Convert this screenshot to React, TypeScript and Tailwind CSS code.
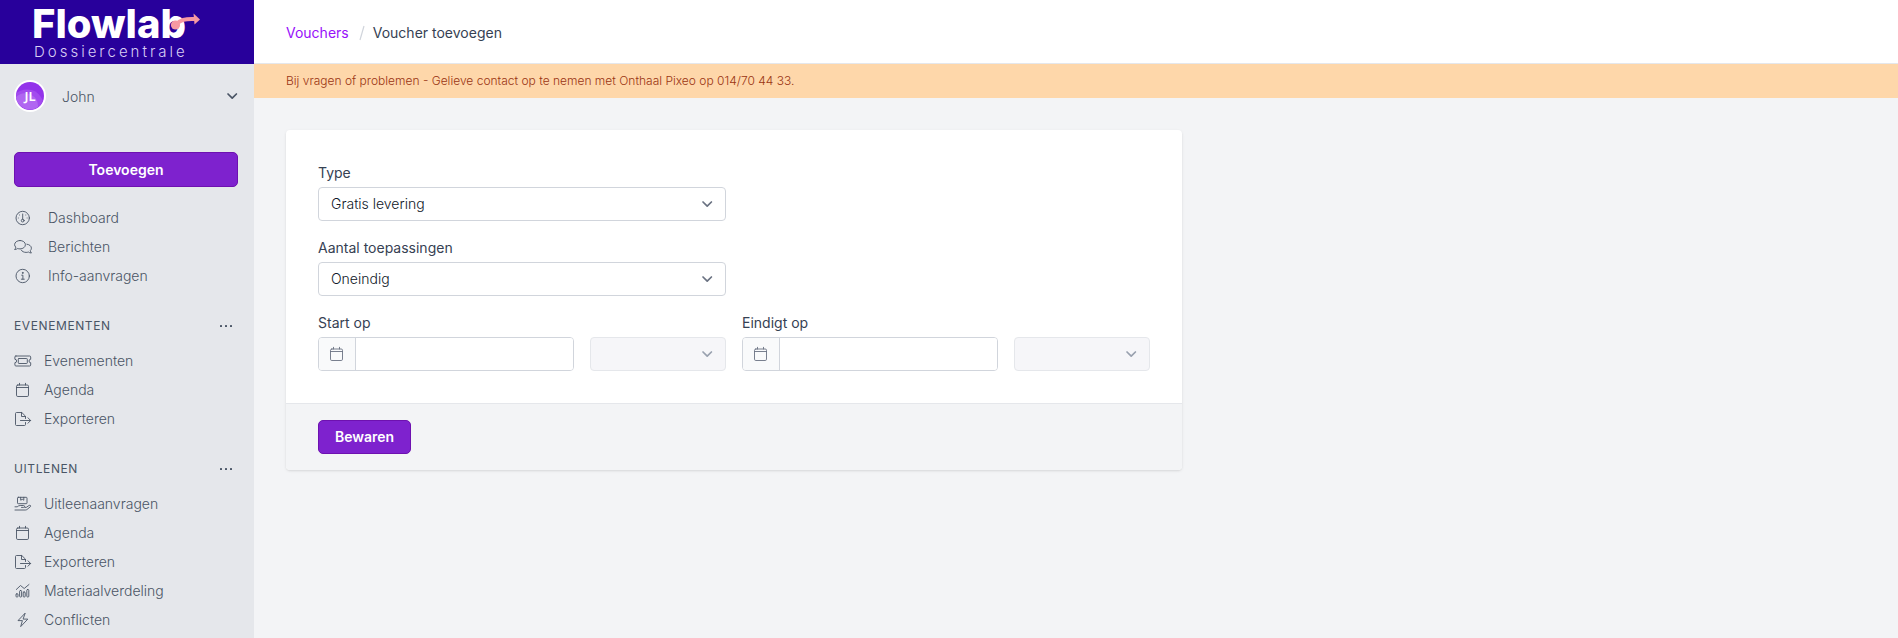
import React, { type ReactNode } from 'react';

function Icon({ children, className = '' }: { children: ReactNode; className?: string }) {
  return (
    <svg
      viewBox="0 0 18 16"
      className={`h-4 w-[18px] shrink-0 ${className}`}
      fill="none"
      stroke="currentColor"
      strokeWidth="0.9"
      strokeLinecap="round"
      strokeLinejoin="round"
      aria-hidden="true"
    >
      {children}
    </svg>
  );
}

const GaugeIcon = () => (
  <Icon>
    <circle cx="8.700" cy="8" r="6.700" />
    <circle cx="8.700" cy="10.600" r="1.400" />
    <path d="M8.700 9.200V4M5.600 5h.01M11.800 5h.01M4.300 8h.01M13.100 8h.01" />
  </Icon>
);

const ChatIcon = () => (
  <Icon>
    <path d="M6 1.500c3 0 5.400 1.800 5.400 4.200S9 9.900 6 9.900c-.8 0-1.600-.1-2.300-.4-.8.600-1.800 1-3.100 1 .7-.7 1.100-1.500 1.200-2.400C1 7.400.6 6.600.6 5.700.6 3.300 3 1.500 6 1.500z" />
    <path d="M12.900 5.200c2.600.3 4.500 1.900 4.500 4 0 .9-.4 1.700-1.100 2.400.1.900.5 1.700 1.100 2.400-1.200 0-2.200-.4-3-1-.7.300-1.500.4-2.300.4-2.200 0-4-.9-4.900-2.300" />
  </Icon>
);

const InfoIcon = () => (
  <Icon>
    <circle cx="8.700" cy="8" r="6.700" />
    <path d="M7.700 7.200h1.200v3.900M7.300 11.200h3" />
    <circle cx="8.700" cy="4.900" r=".45" fill="currentColor" />
  </Icon>
);

const TicketIcon = () => (
  <Icon>
    <path d="M1.900 3h13.800c.6 0 1 .4 1 1v2.300a1.700 1.700 0 0 0 0 3.400V12c0 .6-.4 1-1 1H1.900c-.6 0-1-.4-1-1V9.700a1.700 1.700 0 0 0 0-3.400V4c0-.6.4-1 1-1z" />
    <rect x="4.300" y="5.500" width="9" height="5" rx=".7" />
  </Icon>
);

const CalendarIcon = () => (
  <Icon>
    <rect x="2.500" y="3" width="12" height="11.500" rx="1.300" />
    <path d="M2.500 5.500h12M5.500 1.300V3M11.500 1.300V3" />
  </Icon>
);

const ExportIcon = () => (
  <Icon>
    <path d="M11.500 11.500v2c0 .6-.4 1-1 1h-8c-.6 0-1-.4-1-1v-11c0-.6.400-1 1-1h5.300l3.700 3.700V7.500" />
    <path d="M7.500 1.500v4h4M6.500 9.500h10M14 6.800l2.600 2.700L14 12.200" />
  </Icon>
);

const HandBoxIcon = () => (
  <Icon>
    <rect x="3.500" y="1.300" width="9.500" height="6.400" rx=".8" />
    <path d="M6.700 1.300v2.900l1.600-.9 1.500.9V1.300" />
    <path d="M1 10.800h2.200c1-.9 2-1.300 3-1.300h3.400c1.400 0 1.300 1.900 0 1.900H7.500M10.800 11.400h1.400l3-2c1.200-.6 2 .6 1.100 1.400l-3.200 2.600c-.5.4-1 .6-1.700.6H1" />
  </Icon>
);

const ChartIcon = () => (
  <Icon>
    <path d="M2.300 6.500l4.200-4 3.700 3L15 1.500" />
    <rect x="2" y="10.800" width="2" height="3.200" rx=".8" />
    <rect x="5.600" y="7.500" width="2" height="6.500" rx=".8" />
    <rect x="9.200" y="9" width="2" height="5" rx=".8" />
    <rect x="12.800" y="6.500" width="2" height="7.500" rx=".8" />
  </Icon>
);

const BoltIcon = () => (
  <Icon>
    <path d="M10.900 1.400L4 8.600h4.400l-1.700 6 7.100-7.500H9.500z" />
  </Icon>
);

function Chevron({ className = '' }: { className?: string }) {
  return (
    <svg viewBox="0 0 12 8" className={`h-2 w-3 ${className}`} fill="none" stroke="currentColor" strokeWidth="1.700" strokeLinecap="round" strokeLinejoin="round" aria-hidden="true">
      <path d="M2 2l4.200 4.200L10.400 2" />
    </svg>
  );
}

type Item = { label: string; icon: ReactNode };

const mainItems: Item[] = [
  { label: 'Dashboard', icon: <GaugeIcon /> },
  { label: 'Berichten', icon: <ChatIcon /> },
  { label: 'Info-aanvragen', icon: <InfoIcon /> },
];

const sections: { title: string; items: Item[] }[] = [
  {
    title: 'Evenementen',
    items: [
      { label: 'Evenementen', icon: <TicketIcon /> },
      { label: 'Agenda', icon: <CalendarIcon /> },
      { label: 'Exporteren', icon: <ExportIcon /> },
    ],
  },
  {
    title: 'Uitlenen',
    items: [
      { label: 'Uitleenaanvragen', icon: <HandBoxIcon /> },
      { label: 'Agenda', icon: <CalendarIcon /> },
      { label: 'Exporteren', icon: <ExportIcon /> },
      { label: 'Materiaalverdeling', icon: <ChartIcon /> },
      { label: 'Conflicten', icon: <BoltIcon /> },
    ],
  },
];

function NavList({ items, wide = false }: { items: Item[]; wide?: boolean }) {
  return (
    <ul>
      {items.map((item) => (
        <li key={item.label}>
          <a href="#" className={`flex h-[29px] items-center ${wide ? 'gap-4' : 'gap-3'}`}>
            {item.icon}
            {item.label}
          </a>
        </li>
      ))}
    </ul>
  );
}

function Logo() {
  return (
    <a href="#" className="flex h-16 flex-col bg-[#28009b] pl-8 text-white">
      <span className="relative self-start text-[40px] leading-[48px] font-extrabold">
        Flowlab
        <svg viewBox="0 0 30 18" className="absolute top-[13px] -right-[14px] h-[18px] w-[30px]" aria-hidden="true">
          <circle cx="5.500" cy="12" r="4.600" fill="#f899a2" />
          <path d="M5.500 12C10 7 15 5.500 25 6" fill="none" stroke="#f899a2" strokeWidth="4" />
          <path d="M23.500 0.500l2.200 2 4.300 4-5.500 5z" fill="#f899a2" />
        </svg>
      </span>
      <span className="pl-[2px] text-[15px] leading-[8px] font-light tracking-[0.2em] text-[#d9cff5]">Dossiercentrale</span>
    </a>
  );
}

function Sidebar() {
  return (
    <aside className="w-[254px] shrink-0 bg-gray-200 font-light text-gray-600">
      <Logo />
      <div className="pr-4 pl-[14px]">
        <button type="button" className="mt-4 flex w-full items-center text-left">
          <svg viewBox="0 0 32 32" className="size-8 shrink-0" aria-hidden="true">
            <circle cx="16" cy="16" r="16" fill="#fff" />
            <circle cx="16" cy="16" r="14" fill="#9333ea" />
            <path d="M2.400 13A17 17 0 0 1 29 21 14 14 0 0 1 2.400 13z" fill="#a24bee" />
            <path d="M2 17a13 13 0 0 1 22 10A14 14 0 0 1 2 17z" fill="#b066f1" />
            <text x="16" y="21" textAnchor="middle" fill="#fff" fontFamily="Noto Sans, sans-serif" fontSize="13" fontWeight="600">JL</text>
          </svg>
          <span className="ml-4 grow pt-[2px] leading-5">John</span>
          <Chevron />
        </button>
        <button type="button" className="mt-10 h-[35px] w-full rounded-[5px] border border-purple-800 bg-[#7e22ce] font-semibold text-white">
          Toevoegen
        </button>
        <nav className="mt-4">
          <NavList items={mainItems} wide />
          {sections.map((section) => (
            <section key={section.title} className="pt-[26px]">
              <div className="flex h-5 items-center justify-between">
                <h2 className="text-xs font-normal tracking-wider uppercase">{section.title}</h2>
                <button type="button" aria-label={`Meer opties voor ${section.title}`} className="p-1">
                  <svg viewBox="0 0 14 2" className="h-[2px] w-[14px]" fill="currentColor" aria-hidden="true">
                    <rect width="2" height="2" rx=".5" />
                    <rect x="5" width="2" height="2" rx=".5" />
                    <rect x="10" width="2" height="2" rx=".5" />
                  </svg>
                </button>
              </div>
              <div className="mt-[10px]">
                <NavList items={section.items} />
              </div>
            </section>
          ))}
        </nav>
      </div>
    </aside>
  );
}

function SelectBox({ id, value, label, disabled = false }: { id: string; value?: string; label?: string; disabled?: boolean }) {
  return (
    <div className={`relative ${disabled ? 'text-gray-400' : 'text-gray-500'}`}>
      <select
        id={id}
        aria-label={label}
        disabled={disabled}
        className="block h-[34px] w-full appearance-none rounded-[4px] border border-gray-300 bg-white px-3 font-light text-gray-900 disabled:border-gray-200 disabled:bg-[#f6f6f9] disabled:opacity-100"
      >
        <option>{value ?? ''}</option>
      </select>
      <Chevron className="pointer-events-none absolute top-[13px] right-[13px]" />
    </div>
  );
}

const labelClass = 'block leading-[21px] text-gray-700';

function SelectField({ id, label, value }: { id: string; label: string; value: string }) {
  return (
    <div className="flex flex-col gap-1">
      <label htmlFor={id} className={labelClass}>{label}</label>
      <SelectBox id={id} value={value} />
    </div>
  );
}

function DateField({ id, label }: { id: string; label: string }) {
  return (
    <div className="flex flex-col gap-1">
      <label htmlFor={id} className={labelClass}>{label}</label>
      <div className="flex gap-4">
        <div className="flex h-[34px] min-w-0 grow overflow-hidden rounded-[4px] border border-gray-300">
          <span className="flex w-[37px] shrink-0 items-center justify-center border-r border-gray-300 bg-gray-50 text-gray-500">
            <CalendarIcon />
          </span>
          <input id={id} type="text" className="w-full min-w-0 bg-white px-3 outline-none" />
        </div>
        <div className="w-[136px] shrink-0">
          <SelectBox id={`${id}-tijd`} label={`${label} tijdstip`} disabled />
        </div>
      </div>
    </div>
  );
}

export default function App() {
  return (
    <div className="flex h-screen overflow-hidden bg-gray-100 font-[Inter,sans-serif] text-sm">
      <Sidebar />
      <div className="min-w-0 grow">
        <header className="flex h-16 items-center border-b border-gray-200 bg-white px-8 pt-[2px]">
          <nav aria-label="Kruimelpad" className="flex items-center text-gray-700">
            <a href="#" className="text-purple-600">Vouchers</a>
            <svg viewBox="0 0 6 16" className="mr-2 ml-[10px] h-4 w-[6px] text-gray-300" stroke="currentColor" strokeWidth="1.200" aria-hidden="true">
              <path d="M5 1L1 15" />
            </svg>
            <span>Voucher toevoegen</span>
          </nav>
        </header>
        <p className="bg-[#fed7aa] px-8 py-2 text-xs leading-[18px] font-light text-[#9a3412]">
          Bij vragen of problemen - Gelieve contact op te nemen met Onthaal Pixeo op 014/70 44 33.
        </p>
        <main className="p-8">
          <form className="max-w-4xl overflow-hidden rounded-[4px] bg-white shadow-sm">
            <div className="grid grid-cols-2 gap-4 p-8">
              <SelectField id="type" label="Type" value="Gratis levering" />
              <div className="col-start-1">
                <SelectField id="aantal" label="Aantal toepassingen" value="Oneindig" />
              </div>
              <div className="col-start-1">
                <DateField id="start" label="Start op" />
              </div>
              <DateField id="einde" label="Eindigt op" />
            </div>
            <div className="border-t border-gray-200 bg-gray-100 px-8 py-4">
              <button type="button" className="block h-[34px] rounded-[5px] border border-purple-800 bg-[#7e22ce] px-4 font-semibold text-white">
                Bewaren
              </button>
            </div>
          </form>
        </main>
      </div>
    </div>
  );
}
